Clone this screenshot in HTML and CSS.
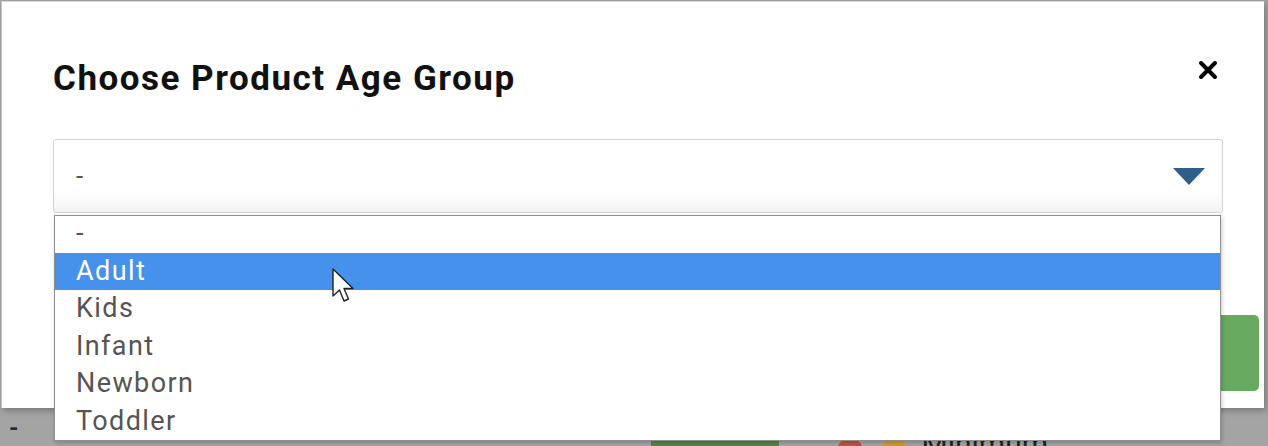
FILE: index.html
```html
<!DOCTYPE html>
<html lang="en">
<head>
    <meta charset="UTF-8">
    <title>Choose Product Age Group</title>
    <link rel="stylesheet" href="styles.css">
</head>
<body>
    <div class="modal">
        <div class="modal-header">
            <h2 class="modal-title">Choose Product Age Group</h2>
            <button class="close" aria-label="Close">
                <svg width="20" height="20" viewBox="0 0 20 20"><path d="M3 3 L17 17 M17 3 L3 17" stroke="#000" stroke-width="4" stroke-linecap="round"/></svg>
            </button>
        </div>
        <div class="modal-body">
            <div class="select">
                <span class="select-value">-</span>
                <svg class="select-arrow" width="32" height="18" viewBox="0 0 32 18"><polygon points="0,0 32,0 16,17" fill="#2e5e8a"/></svg>
            </div>
        </div>
        <div class="modal-footer">
            <button class="btn-save"></button>
        </div>
    </div>

    <div class="page-strip">
        <span class="strip-dash">-</span>
        <span class="strip-green"></span>
        <span class="dot dot-red"></span>
        <span class="dot dot-orange"></span>
        <span class="strip-text">Minimum</span>
    </div>

    <ul class="options">
        <li>-</li>
        <li class="active">Adult</li>
        <li>Kids</li>
        <li>Infant</li>
        <li>Newborn</li>
        <li>Toddler</li>
    </ul>

    <svg class="cursor" width="28" height="40" viewBox="0 0 28 40">
        <path d="M2 2 L2 29 L8.5 23 L13 34 L17.5 32 L13 21.5 L22 21.5 Z" fill="#fff" stroke="#222" stroke-width="1.4" stroke-linejoin="round"/>
    </svg>
</body>
</html>
```

FILE: styles.css
```css
body {
    margin: 0;
    background-color: #a4a4a4;
    font-family: Roboto, "Liberation Sans", sans-serif;
    width: 1268px;
    height: 446px;
    overflow: hidden;
    position: relative;
}

.modal {
    margin: 1px 0 0 1px;
    width: 1263px;
    height: 407px;
    box-sizing: border-box;
    background-color: #fff;
    border-left: 1px solid #c8c8c8;
    border-top: 1px solid #d8d8d8;
    box-shadow: 2px 3px 6px rgba(0, 0, 0, 0.25);
    padding: 0 0 0 51px;
}

.modal-header {
    display: flex;
    justify-content: space-between;
    align-items: flex-start;
    padding-right: 45px;
}

.modal-title {
    margin: 55px 0 0 0;
    font-size: 35px;
    font-weight: 700;
    letter-spacing: 1.5px;
    color: #111;
    line-height: 44px;
}

.close {
    margin-top: 58px;
    border: none;
    background: none;
    padding: 0;
    width: 22px;
    height: 22px;
}

.modal-body {
    padding: 38px 41px 0 0;
}

.select {
    height: 74px;
    box-sizing: border-box;
    border: 1px solid #d2d2d2;
    border-radius: 3px;
    background: linear-gradient(#fff 70%, #f3f3f3);
    display: flex;
    align-items: center;
    justify-content: space-between;
    padding: 0 17px 0 22px;
}

.select-value {
    font-size: 26px;
    color: #555;
}

.select-arrow {
    margin-top: 2px;
}

.modal-footer {
    display: flex;
    justify-content: flex-end;
    padding: 102px 5px 0 0;
}

.btn-save {
    width: 120px;
    height: 76px;
    border: none;
    border-radius: 5px;
    background-color: #66a95f;
}

.page-strip {
    display: flex;
    align-items: flex-start;
    height: 38px;
}

.strip-dash {
    margin: 6px 0 0 9px;
    font-size: 24px;
    font-weight: 700;
    color: #1d2a44;
}

.strip-green {
    margin: 31px 0 0 633px;
    width: 128px;
    height: 20px;
    background-color: #4f8a3f;
}

.dot {
    margin-top: 30px;
    width: 26px;
    height: 26px;
    border-radius: 50%;
}

.dot-red {
    margin-left: 58px;
    background-color: #c5533a;
}

.dot-orange {
    margin-left: 18px;
    background-color: #d49a2a;
}

.strip-text {
    margin: 26px 0 0 14px;
    font-size: 30px;
    line-height: 20px;
    color: #222;
}

.options {
    position: absolute;
    left: 54px;
    top: 215px;
    width: 1167px;
    margin: 0;
    padding: 0;
    list-style: none;
    background-color: #fff;
    border: 1px solid #8e8e8e;
    box-sizing: border-box;
    box-shadow: 1px 2px 4px rgba(0, 0, 0, 0.2);
}

.options li {
    height: 37.4px;
    line-height: 37px;
    padding-left: 21px;
    font-size: 27px;
    letter-spacing: 1.4px;
    color: #555;
}

.options li:first-child {
    height: 37px;
    line-height: 34px;
}

.options li.active {
    background-color: #4591ec;
    color: #fff;
}

.cursor {
    position: absolute;
    left: 331px;
    top: 267px;
}
```
